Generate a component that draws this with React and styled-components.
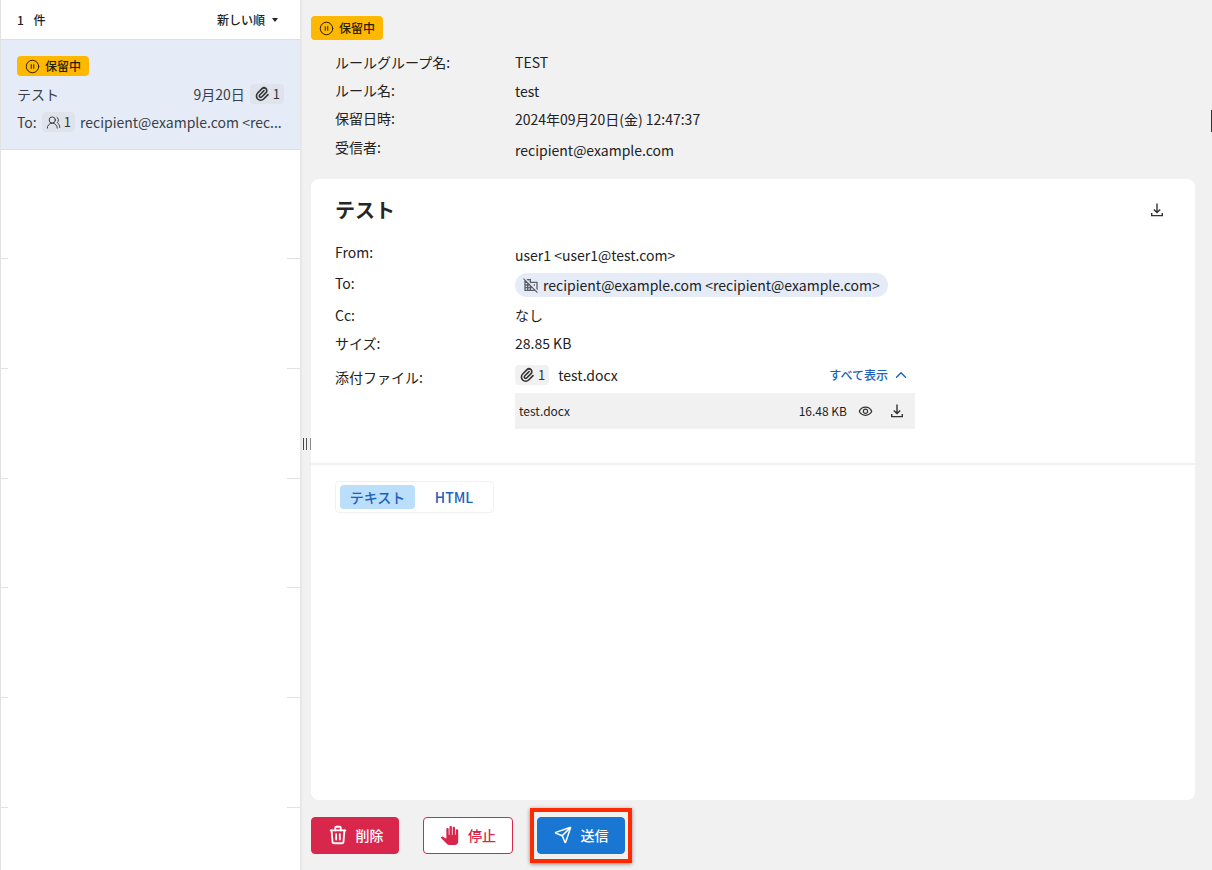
import { createGlobalStyle, styled } from "styled-components";
import { Send, ChevronUp, UsersRound, CirclePause } from "lucide-react";
import { MdDomainDisabled, MdPanTool, MdOutlineVisibility } from "react-icons/md";
import { TbTrash, TbPaperclip } from "react-icons/tb";

const GlobalStyle = createGlobalStyle`
  html, body {
    margin: 0;
    height: 100%;
  }
  body {
    font-family: "Noto Sans CJK JP", "Noto Sans", sans-serif;
    font-size: 14px;
    line-height: 20px;
    color: #1f1f1f;
    background: #f1f1f1;
  }
  #root {
    height: 100%;
  }
`;

const Page = styled.div`
  display: flex;
  width: 1212px;
  height: 870px;
  overflow: hidden;
`;

const Sidebar = styled.aside`
  width: 302px;
  flex: none;
  background: #fff;
  border-left: 1px solid #e2e2e2;
  border-right: 2px solid #e8e8e8;
  box-sizing: border-box;
  display: flex;
  flex-direction: column;
`;

const ListHeader = styled.div`
  height: 39px;
  flex: none;
  display: flex;
  align-items: center;
  justify-content: space-between;
  padding: 0 22px 0 16px;
  font-size: 12px;
  font-weight: 500;
  color: #222;
`;

const Count = styled.span`
  word-spacing: 7px;
`;

const Sort = styled.span`
  display: flex;
  align-items: center;
  gap: 7px;
  &::after {
    content: "";
    border-left: 3.5px solid transparent;
    border-right: 3.5px solid transparent;
    border-top: 4px solid #222;
  }
`;

const ListItem = styled.div`
  height: 110.5px;
  flex: none;
  box-sizing: border-box;
  background: #e5ecf8;
  border-top: 1px solid #dbe0e8;
  border-bottom: 1px solid #dbe0e8;
  padding: 16px 16px 0;
  color: #3a3f47;
`;

const GhostRow = styled.div`
  height: 109.7px;
  flex: none;
  box-sizing: border-box;
  position: relative;
  &::before,
  &::after {
    content: "";
    position: absolute;
    bottom: 0;
    height: 1px;
    background: #e2e2e2;
  }
  &::before {
    left: 0;
    width: 7px;
  }
  &::after {
    right: 0;
    width: 13px;
  }
`;

const HoldBadge = styled.span`
  display: inline-flex;
  align-items: center;
  gap: 5px;
  box-sizing: border-box;
  height: ${(props) => (props.$large ? "24px" : "20px")};
  padding: 0 8px;
  background: #ffb800;
  border-radius: 4px;
  font-size: 12px;
  font-weight: 500;
  color: #2a2000;
`;

const BadgeLine = styled.div`
  display: flex;
`;

const ItemRow = styled.div`
  display: flex;
  align-items: center;
  justify-content: space-between;
  height: 20px;
  margin-top: ${(props) => props.$top}px;
  white-space: nowrap;
`;

const ItemMeta = styled.span`
  display: flex;
  align-items: center;
  gap: 5px;
`;

const CountChip = styled.span`
  display: inline-flex;
  align-items: center;
  gap: 3px;
  height: 20px;
  padding: 0 4px;
  border-radius: 4px;
  font-size: 13px;
  background: ${(props) => props.$bg || "#dfe4ec"};
  color: #333;
`;

const Main = styled.main`
  flex: 1;
  min-width: 0;
  display: flex;
  flex-direction: column;
  padding: 16px 17px 0 9px;
  position: relative;
`;

const Handle = styled.span`
  position: absolute;
  left: 1px;
  top: 438px;
  width: 6px;
  height: 12px;
  border-left: 1px solid #444;
  border-right: 1px solid #888;
  &::after {
    content: "";
    display: block;
    width: 1px;
    height: 12px;
    margin-left: 2px;
    background: #555;
  }
`;

const SideMark = styled.span`
  position: absolute;
  right: 0;
  top: 110px;
  width: 1px;
  height: 22px;
  background: #333;
`;

const InfoList = styled.dl`
  margin: 8px 0 0;
  padding-left: 24px;
  display: grid;
  grid-template-columns: 180px 1fr;
  grid-template-rows: 28px 28px 29px 37px;
  height: 122px;
`;

const Label = styled.dt`
  margin: 0;
  padding-top: 4px;
  color: #222;
`;

const Value = styled.dd`
  margin: 0;
  padding-top: ${(props) => props.$pt}px;
  color: #222;
`;

const Card = styled.section`
  flex: 1;
  min-height: 0;
  margin-top: 9px;
  background: #fff;
  border-radius: 8px;
  display: flex;
  flex-direction: column;
`;

const CardHead = styled.div`
  padding: 16px 24px 0;
  height: 286px;
  box-sizing: border-box;
  border-bottom: 2px solid #f1f1f1;
  flex: none;
`;

const TitleRow = styled.div`
  display: flex;
  align-items: center;
  justify-content: space-between;
  height: 30px;
`;

const Title = styled.h2`
  margin: 0;
  font-size: 20px;
  font-weight: 700;
  color: #262626;
`;

const IconButton = styled.button`
  border: 0;
  padding: 0;
  margin-right: 6px;
  background: none;
  display: flex;
  color: #333;
`;

const MailGrid = styled.div`
  display: grid;
  grid-template-columns: 180px 400px;
  margin-top: 15px;
`;

const MailLabel = styled.div`
  box-sizing: border-box;
  height: ${(props) => props.$h}px;
  padding-top: ${(props) => props.$pt}px;
  color: #222;
`;

const MailValue = styled.div`
  height: ${(props) => props.$h}px;
  display: flex;
  align-items: center;
  color: #222;
`;

const RecipientPill = styled.span`
  display: inline-flex;
  align-items: center;
  gap: 4px;
  height: 24px;
  padding: 0 8px;
  background: #e5ecf8;
  border-radius: 12px;
  svg {
    color: #5b6068;
  }
`;

const AttachRow = styled.div`
  display: flex;
  align-items: center;
  width: 100%;
  gap: 9px;
`;

const ShowAll = styled.span`
  margin-left: auto;
  margin-right: 5px;
  display: flex;
  align-items: center;
  gap: 4px;
  font-size: 12px;
  font-weight: 500;
  color: #1a63bd;
`;

const FileRow = styled.div`
  grid-column: 2;
  height: 36px;
  background: #f1f1f1;
  display: flex;
  align-items: center;
  padding: 0 10px 0 4px;
  font-size: 12px;
`;

const FileSize = styled.span`
  margin-left: auto;
  margin-right: 11px;
`;

const FileActions = styled.span`
  display: flex;
  align-items: center;
  gap: 16px;
  color: #333;
`;

const Tabs = styled.div`
  display: inline-flex;
  align-self: flex-start;
  margin: 16px 0 0 24px;
  padding: 3px 0 3px 4px;
  border: 1px solid #f1f1f1;
  border-radius: 4px;
`;

const Tab = styled.button`
  width: ${(props) => props.$w}px;
  height: 24px;
  border: 0;
  border-radius: 4px;
  padding: 0;
  font: inherit;
  font-weight: 500;
  color: #1a63bd;
  background: ${(props) => (props.$active ? "#bbdefb" : "transparent")};
`;

const Footer = styled.footer`
  height: 70px;
  flex: none;
  display: flex;
  align-items: center;
  gap: 24px;
`;

const ActionButton = styled.button`
  display: inline-flex;
  align-items: center;
  justify-content: center;
  gap: ${(props) => props.$gap}px;
  box-sizing: border-box;
  width: ${(props) => props.$w}px;
  height: 37px;
  padding: 0;
  border-radius: 4px;
  font: inherit;
  font-size: 14px;
  font-weight: 500;
  border: 1px solid ${(props) => props.$border};
  background: ${(props) => props.$bg};
  color: ${(props) => props.$color};
`;

const Highlight = styled.div`
  box-sizing: border-box;
  padding: 5px 3px;
  margin-left: -7px;
  border: 4px solid #ff2a00;
  box-shadow: 0 1px 4px rgba(0, 0, 0, 0.45);
  display: flex;
`;

const DownloadIcon = () => (
  <svg width="16" height="16" viewBox="0 0 16 16" fill="none" stroke="currentColor" strokeWidth="1.4">
    <path d="M8 1.5v9M4.8 7.4 8 10.6l3.2-3.2M2.7 11v2.6h10.6V11" />
  </svg>
);

const App = () => (
  <>
    <GlobalStyle />
    <Page>
      <Sidebar>
        <ListHeader>
          <Count>1 件</Count>
          <Sort>新しい順</Sort>
        </ListHeader>
        <ListItem>
          <BadgeLine>
            <HoldBadge>
              <CirclePause size={15} strokeWidth={1.6} />
              保留中
            </HoldBadge>
          </BadgeLine>
          <ItemRow $top={8}>
            <span>テスト</span>
            <ItemMeta>
              9月20日
              <CountChip>
                <TbPaperclip size={16} strokeWidth={2.4} />1
              </CountChip>
            </ItemMeta>
          </ItemRow>
          <ItemRow $top={8}>
            <ItemMeta>
              To:
              <CountChip>
                <UsersRound size={15} strokeWidth={1.5} />1
              </CountChip>
              recipient@example.com &lt;rec...
            </ItemMeta>
          </ItemRow>
        </ListItem>
        {[1, 2, 3, 4, 5, 6].map((row) => (
          <GhostRow key={row} />
        ))}
      </Sidebar>
      <Main>
        <Handle />
        <SideMark />
        <BadgeLine>
          <HoldBadge $large>
            <CirclePause size={15} strokeWidth={1.6} />
            保留中
          </HoldBadge>
        </BadgeLine>
        <InfoList>
          <Label>ルールグループ名:</Label>
          <Value $pt={4}>TEST</Value>
          <Label>ルール名:</Label>
          <Value $pt={5}>test</Value>
          <Label>保留日時:</Label>
          <Value $pt={5}>2024年09月20日(金) 12:47:37</Value>
          <Label>受信者:</Label>
          <Value $pt={7}>recipient@example.com</Value>
        </InfoList>
        <Card>
          <CardHead>
            <TitleRow>
              <Title>テスト</Title>
              <IconButton>
                <DownloadIcon />
              </IconButton>
            </TitleRow>
            <MailGrid>
              <MailLabel $h={29} $pt={2}>From:</MailLabel>
              <MailValue $h={29}>user1 &lt;user1@test.com&gt;</MailValue>
              <MailLabel $h={32} $pt={4}>To:</MailLabel>
              <MailValue $h={32}>
                <RecipientPill>
                  <MdDomainDisabled size={16} />
                  recipient@example.com &lt;recipient@example.com&gt;
                </RecipientPill>
              </MailValue>
              <MailLabel $h={28} $pt={4}>Cc:</MailLabel>
              <MailValue $h={28}>なし</MailValue>
              <MailLabel $h={28} $pt={4}>サイズ:</MailLabel>
              <MailValue $h={28}>28.85 KB</MailValue>
              <MailLabel $h={36} $pt={10}>添付ファイル:</MailLabel>
              <MailValue $h={36}>
                <AttachRow>
                  <CountChip $bg="#f1f1f1">
                    <TbPaperclip size={16} strokeWidth={2.4} />1
                  </CountChip>
                  test.docx
                  <ShowAll>
                    すべて表示
                    <ChevronUp size={18} strokeWidth={1.8} />
                  </ShowAll>
                </AttachRow>
              </MailValue>
              <FileRow>
                test.docx
                <FileSize>16.48 KB</FileSize>
                <FileActions>
                  <MdOutlineVisibility size={15} />
                  <DownloadIcon />
                </FileActions>
              </FileRow>
            </MailGrid>
          </CardHead>
          <Tabs>
            <Tab $w={75} $active>テキスト</Tab>
            <Tab $w={78}>HTML</Tab>
          </Tabs>
        </Card>
        <Footer>
          <ActionButton $w={88} $gap={7} $bg="#d9274c" $border="#d9274c" $color="#fff">
            <TbTrash size={22} />
            削除
          </ActionButton>
          <ActionButton $w={90} $gap={9} $bg="#fff" $border="#d9274c" $color="#d9274c">
            <MdPanTool size={19} />
            停止
          </ActionButton>
          <Highlight>
            <ActionButton $w={88} $gap={9} $bg="#1976d2" $border="#1976d2" $color="#fff">
              <Send size={18} />
              送信
            </ActionButton>
          </Highlight>
        </Footer>
      </Main>
    </Page>
  </>
);

export default App;
